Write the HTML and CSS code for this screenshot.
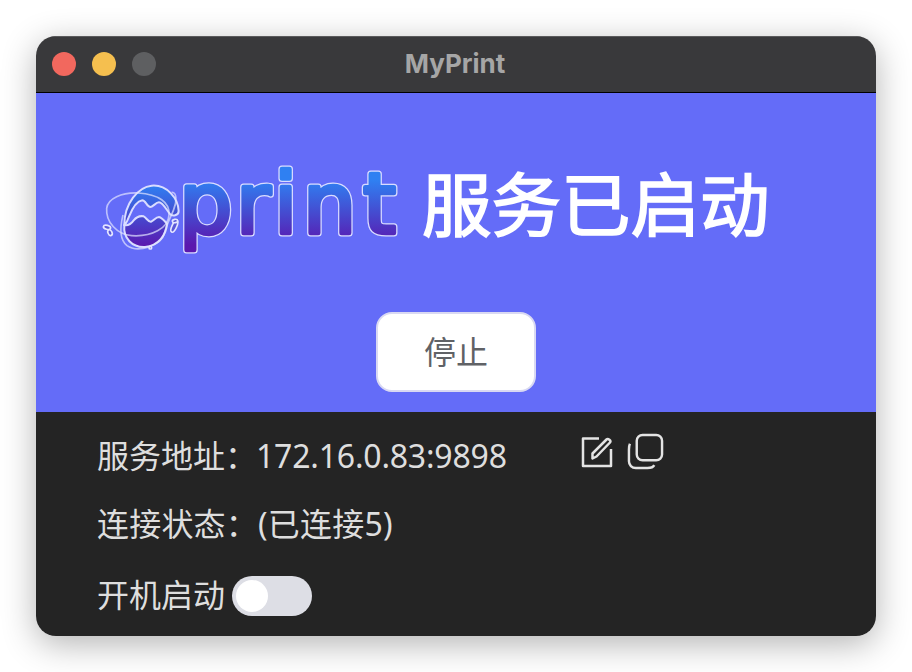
FILE: index.html
```html
<!DOCTYPE html>
<html>
<head>
    <title>MyPrint</title>
    <link rel="stylesheet" href="styles.css">
</head>
<body>
    <div class="window">
        <div class="titlebar">
            <div class="lights">
                <span class="light red"></span>
                <span class="light yellow"></span>
                <span class="light gray"></span>
            </div>
            <div class="title">MyPrint</div>
        </div>
        <div class="hero">
            <div class="hero-row">
                <svg class="logo" viewBox="100 160 302 104" width="302" height="104">
                    <defs>
                        <linearGradient id="grad" gradientUnits="userSpaceOnUse" x1="0" y1="180" x2="0" y2="245">
                            <stop offset="0" stop-color="#2f80f2"/>
                            <stop offset="1" stop-color="#5b17ae"/>
                        </linearGradient>
                        <linearGradient id="blobGrad" gradientUnits="userSpaceOnUse" x1="0" y1="30" x2="0" y2="216">
                            <stop offset="0" stop-color="#2f80f2"/>
                            <stop offset="1" stop-color="#5b17ae"/>
                        </linearGradient>
                        <text id="word" x="179 236 274 303 363" y="233">print</text>
                    </defs>
                    <g transform="translate(95 175) scale(.3333)">
                        <path class="blob" d="M88 150C88 85 130 36 170 32C215 28 250 70 251 108C251 122 232 126 224 116C212 100 202 82 192 82C182 82 174 96 166 96C156 96 152 76 142 76C126 78 112 100 102 125C96 140 92 150 88 150Z"/>
                        <path class="blob" d="M88 150C98 152 106 150 116 136C126 124 136 122 146 124C154 128 160 142 168 140C176 138 182 126 192 126C202 128 210 140 216 146C214 180 190 212 150 216C112 218 84 190 88 150Z"/>
                        <path class="wire" d="M35 100C38 70 80 52 130 54C190 58 226 82 222 120C220 160 170 186 110 182C65 178 32 140 35 100Z"/>
                        <path class="wire" d="M230 52C246 50 246 80 236 104C226 130 214 150 208 176C200 210 130 236 96 212C76 196 74 160 84 120"/>
                        <ellipse class="drop" cx="36" cy="157" rx="11" ry="6" transform="rotate(15 36 157)"/>
                        <ellipse class="drop" cx="45" cy="173" rx="6" ry="9" transform="rotate(-25 45 173)"/>
                        <ellipse class="drop" cx="238" cy="154" rx="7" ry="19" transform="rotate(25 238 154)"/>
                        <ellipse class="drop" cx="240" cy="138" rx="8" ry="5" transform="rotate(-10 240 138)"/>
                        <circle class="drop" cx="166" cy="218" r="4"/>
                    </g>
                    <use class="word-edge" href="#word"/>
                    <use class="word-fill" href="#word"/>
                </svg>
                <h1 class="hero-title">服务已启动</h1>
            </div>
            <button class="stop-btn" type="button">停止</button>
        </div>
        <div class="info">
            <div class="row">
                <span class="addr">服务地址：<span class="addr-value">172.16.0.83:9898</span></span>
                <div class="icons">
                    <svg class="icon" width="32" height="32" viewBox="0 0 32 32">
                        <path d="M18 2.500H2V30H30V13"/>
                        <path d="M13 23.500V18.500L27 4.500C28.500 3 32 5.500 30.500 7.500L17 21.500Z" transform="translate(-1.500 -1)"/>
                    </svg>
                    <svg class="icon" width="37" height="37" viewBox="0 0 38 38">
                        <rect x="10" y="2" width="26" height="26" rx="6"/>
                        <path d="M3 11C2 13 2 15 2 17V29C2 33 5 36 9 36H21C24 36 27 35 28 33"/>
                    </svg>
                </div>
            </div>
            <div class="row row-status">连接状态：(已连接5)</div>
            <div class="row row-boot">
                <span>开机启动</span>
                <span class="toggle"><span class="knob"></span></span>
            </div>
        </div>
    </div>
</body>
</html>
```

FILE: styles.css
```css
* { box-sizing: border-box; }
body { margin: 0; padding: 36px; background: #fff; font-family: "Noto Sans", "Noto Sans CJK SC", sans-serif; }
.window { width: 840px; height: 600px; border-radius: 20px; overflow: hidden; box-shadow: 0 8px 34px rgba(0, 0, 0, .3); }

.titlebar { position: relative; display: flex; align-items: center; justify-content: center; height: 57px; padding-bottom: 3px; background: #39393b; border-top: 1px solid #5a5a5c; border-bottom: 1px solid #000; }
.lights { position: absolute; left: 16px; top: 15px; display: flex; gap: 16px; }
.light { width: 24px; height: 24px; border-radius: 50%; }
.red { background: #f2685e; }
.yellow { background: #f5bf4f; }
.gray { background: #5e5f61; }
.title { margin-left: -2px; font-family: Inter, sans-serif; font-size: 26px; font-weight: 700; color: #a6a6a6; }

.hero { display: flex; flex-direction: column; align-items: center; height: 319px; padding-top: 67px; background: #646cf8; }
.hero-row { display: flex; align-items: center; gap: 22px; width: 100%; padding-left: 64px; height: 104px; }
.logo { flex: none; }
.hero-title { margin: 0 0 24px -2px; font-size: 69.500px; font-weight: 400; -webkit-text-stroke: 1.700px #fff; color: #fff; white-space: nowrap; }
.blob { fill: url(#blobGrad); stroke: #d9dcff; stroke-width: 6; }
.wire { fill: none; stroke: rgba(225, 228, 255, .7); stroke-width: 5; }
.drop { fill: #5a58d8; stroke: #e3e5ff; stroke-width: 5; }
#word { font-family: "DejaVu Sans", sans-serif; font-size: 84px; stroke-linejoin: round; stroke-linecap: round; }
.word-edge { fill: #d9dcff; stroke: #d9dcff; stroke-width: 7px; }
.word-fill { fill: url(#grad); stroke: url(#grad); stroke-width: 4.500px; }
.stop-btn { width: 160px; height: 80px; margin-top: 48px; padding: 0 0 5px; background: #fff; border: 2px solid #d9d9f2; border-radius: 16px; font-family: inherit; font-size: 32px; color: #606266; }

.info { height: 224px; padding: 18px 0 0 61px; background: #242424; color: #dedede; font-size: 32px; }
.row { display: flex; align-items: center; height: 48px; white-space: nowrap; }
.addr { width: 484px; }
.addr-value { letter-spacing: -.2px; margin-left: -1px; }
.icons { display: flex; align-items: center; gap: 14px; padding: 0 0 5px; }
.icon { fill: none; stroke: #e4e4e4; stroke-width: 2.500; stroke-linejoin: round; }
.row-status { margin-top: 20px; letter-spacing: .2px; }
.row-boot { margin-top: 23px; gap: 7px; }
.row-boot .toggle { margin-top: 6px; }
.toggle { display: flex; align-items: center; width: 80px; height: 40px; padding: 2px 4px; border-radius: 20px; background: #dddee5; }
.knob { width: 32px; height: 32px; border-radius: 50%; background: #fff; }
```
